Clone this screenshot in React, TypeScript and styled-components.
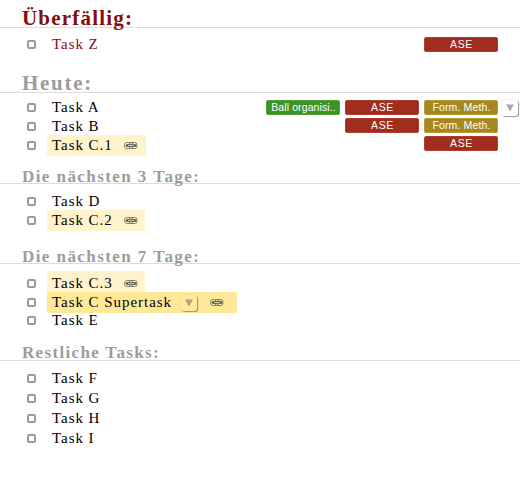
import React from "react";
import styled, { createGlobalStyle } from "styled-components";

const GlobalStyle = createGlobalStyle`
  body { margin: 0; background: #fff; }
  * { box-sizing: border-box; }
`;

const Page = styled.main`
  display: flex;
  flex-direction: column;
  width: 520px;
  height: 477px;
  overflow: hidden;
  font-family: "Liberation Serif", serif;
`;

const Section = styled.section<{ $height: number }>`
  flex: none;
  height: ${(p) => p.$height}px;
`;

const Heading = styled.h2<{ $large?: boolean; $color?: string; $spacing: number; $leading?: number }>`
  margin: 0;
  height: ${(p) => (p.$large ? 28 : 26)}px;
  padding-left: 22px;
  border-bottom: 1px solid #dcdcdc;
  font-size: ${(p) => (p.$large ? 21 : 17)}px;
  line-height: ${(p) => p.$leading ?? (p.$large ? 36 : 38)}px;
  letter-spacing: ${(p) => p.$spacing}px;
  color: ${(p) => p.$color ?? "#9c9c9c"};
  white-space: nowrap;
`;

const Body = styled.div<{ $top: number }>`
  display: flex;
  justify-content: space-between;
  align-items: flex-start;
  padding: ${(p) => p.$top}px 0 0 27px;
`;

const List = styled.ul<{ $gap?: number }>`
  display: flex;
  flex-direction: column;
  gap: ${(p) => p.$gap ?? 0}px;
  margin: 0;
  padding: 0;
  list-style: none;
`;

const Row = styled.li<{ $pull?: boolean }>`
  display: flex;
  align-items: center;
  gap: 11px;
  height: 19px;
  margin-top: ${(p) => (p.$pull ? -1 : 0)}px;
`;

const Check = styled.span`
  width: 9px;
  height: 9px;
  border: 2px solid #9c9c9c;
  border-radius: 2px;
  background: #fff;
`;

const Label = styled.span<{ $bg?: string; $width?: number; $raise?: number; $color?: string }>`
  display: flex;
  align-items: center;
  flex: none;
  height: 21px;
  width: ${(p) => (p.$width ? `${p.$width}px` : "auto")};
  padding-left: 5px;
  padding-top: ${(p) => (p.$raise ?? 0) * 2}px;
  margin-top: ${(p) => -(p.$raise ?? 0) * 2}px;
  background: ${(p) => p.$bg ?? "transparent"};
  color: ${(p) => p.$color ?? "#000"};
  font-size: 15px;
  line-height: 19px;
  letter-spacing: 0.95px;
  white-space: nowrap;
`;

const LinkIcon = styled.svg`
  flex: none;
  margin-left: 10px;
`;

const Toggle = styled.button<{ $tinted?: boolean }>`
  display: flex;
  align-items: center;
  justify-content: center;
  flex: none;
  width: 16px;
  height: 16px;
  padding: 0;
  border: 0;
  border-radius: 3px;
  color: ${(p) => (p.$tinted ? "#b3a066" : "#aaa")};
  background: ${(p) => (p.$tinted ? "#ffeaa0" : "#fff")};
  box-shadow: 1px 1px 1px ${(p) => (p.$tinted ? "#a59455" : "#999")},
    0 0 2px ${(p) => (p.$tinted ? "#d9c67d" : "#ccc")};
  margin-left: ${(p) => (p.$tinted ? 9 : 0)}px;
  margin-right: ${(p) => (p.$tinted ? 2 : 0)}px;
`;

const Tags = styled.div<{ $shift: number }>`
  display: flex;
  flex-direction: column;
  gap: 3px;
  width: 254px;
  margin-top: ${(p) => p.$shift}px;
`;

const TagRow = styled.div`
  display: flex;
  justify-content: flex-end;
  align-items: center;
  gap: 5px;
  height: 15px;
  padding-right: 22px;
`;

const TagToggle = styled.div`
  margin-right: -20px;
  margin-left: -1px;
`;

const tones = {
  red: ["#a02d1e", "#ad3e2d"],
  green: ["#3e9227", "#4fa336"],
  gold: ["#a68722", "#b69a35"],
};

const Tag = styled.span<{ $tone: keyof typeof tones; $spacing: number }>`
  width: 74px;
  height: 15px;
  padding-left: 1px;
  border: 1px solid ${(p) => tones[p.$tone][1]};
  border-radius: 2px;
  background: ${(p) => tones[p.$tone][0]};
  color: #fff;
  font: 10.5px/13px "Liberation Sans", sans-serif;
  letter-spacing: ${(p) => p.$spacing}px;
  text-align: center;
  white-space: nowrap;
`;

const Chain = () => (
  <LinkIcon width="16" height="9" viewBox="0 0 16 9" fill="none">
    <rect x="1.5" y="1.5" width="8.5" height="6" rx="2.5" stroke="#8a8973" />
    <rect x="6" y="1.5" width="8" height="6" rx="2.5" stroke="#77766a" />
    <path d="M4 4.5h8" stroke="#4f4f42" strokeWidth="2.6" strokeLinecap="round" />
    <path d="M5 4.5h6" stroke="#d8d2b2" strokeWidth="0.9" />
  </LinkIcon>
);

const Arrow = ({ tinted }: { tinted?: boolean }) => (
  <Toggle $tinted={tinted} aria-label="Aufklappen">
    <svg width="8" height="8" viewBox="0 0 8 8">
      <path d="M0 .5h8L4 7.5z" fill="currentColor" />
    </svg>
  </Toggle>
);

const Ase = () => <Tag $tone="red" $spacing={0.6}>ASE</Tag>;
const Form = () => <Tag $tone="gold" $spacing={0.15}>Form. Meth.</Tag>;

type TaskProps = {
  name: string;
  color?: string;
  bg?: string;
  width?: number;
  raise?: number;
  toggle?: boolean;
  pull?: boolean;
};

const Task = ({ name, color, bg, width, raise, toggle, pull }: TaskProps) => (
  <Row $pull={pull}>
    <Check />
    <Label $bg={bg} $width={width} $raise={raise} $color={color}>
      {name}
      {toggle && <Arrow tinted />}
      {bg && <Chain />}
    </Label>
  </Row>
);

export default function App() {
  return (
    <>
      <GlobalStyle />
      <Page>
        <Section $height={65}>
          <Heading $large $color="#850d0d" $spacing={1.2}>Überfällig:</Heading>
          <Body $top={7}>
            <List><Task name="Task Z" color="#850d0d" /></List>
            <Tags $shift={2}><TagRow><Ase /></TagRow></Tags>
          </Body>
        </Section>
        <Section $height={93}>
          <Heading $large $spacing={1.7}>Heute:</Heading>
          <Body $top={5}>
            <List>
              <Task name="Task A" />
              <Task name="Task B" />
              <Task name="Task C.1" bg="#fff3cc" width={99} />
            </List>
            <Tags $shift={2}>
              <TagRow>
                <Tag $tone="green" $spacing={0.1}>Ball organisi..</Tag>
                <Ase />
                <Form />
                <TagToggle><Arrow /></TagToggle>
              </TagRow>
              <TagRow><Ase /><Form /></TagRow>
              <TagRow><Ase /></TagRow>
            </Tags>
          </Body>
        </Section>
        <Section $height={80}>
          <Heading $spacing={1.43}>Die nächsten 3 Tage:</Heading>
          <Body $top={8}>
            <List>
              <Task name="Task D" />
              <Task name="Task C.2" bg="#fff3cc" width={98} />
            </List>
          </Body>
        </Section>
        <Section $height={97}>
          <Heading $spacing={1.43}>Die nächsten 7 Tage:</Heading>
          <Body $top={10}>
            <List>
              <Task name="Task C.3" bg="#fff3cc" width={98} raise={2} />
              <Task name="Task C Supertask" bg="#ffe999" width={190} toggle />
              <Task name="Task E" pull />
            </List>
          </Body>
        </Section>
        <Section $height={142}>
          <Heading $spacing={1.33} $leading={36}>Restliche Tasks:</Heading>
          <Body $top={8}>
            <List $gap={1}>
              <Task name="Task F" />
              <Task name="Task G" />
              <Task name="Task H" />
              <Task name="Task I" />
            </List>
          </Body>
        </Section>
      </Page>
    </>
  );
}
